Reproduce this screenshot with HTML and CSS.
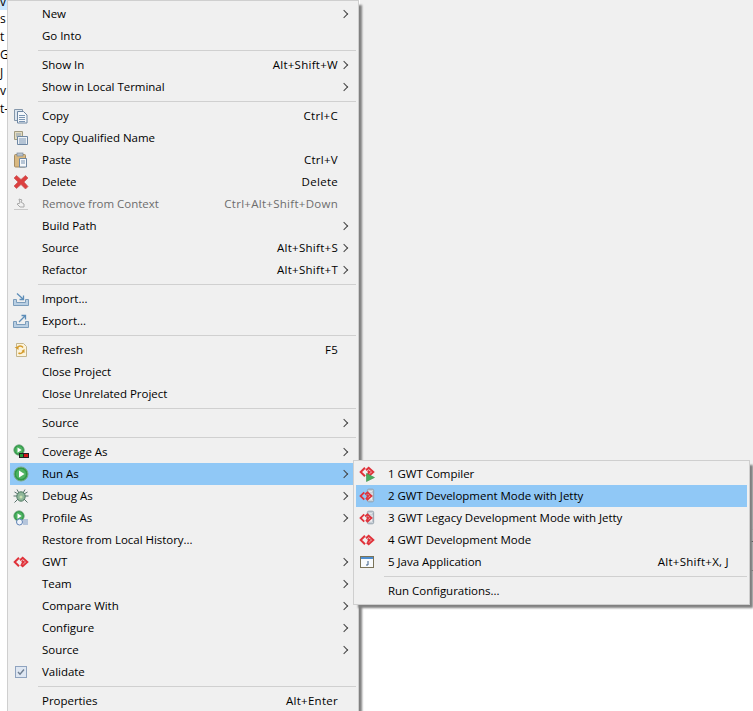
FILE: index.html
```html
<!DOCTYPE html>
<html lang="en">
<head>
<meta charset="utf-8">
<title>Context menu</title>
<link rel="stylesheet" href="styles.css">
</head>
<body>
<svg class="defs" width="0" height="0" aria-hidden="true">
  <defs>
    <symbol id="gwt" viewBox="0 0 16 16">
      <path d="M6 3.800 1.700 8 6 12.200M7 6.300 9.700 3.800 14.300 8 9.700 12.200 7.800 10.400M8.700 6.800 10.700 8 8.700 10" fill="none" stroke="#e0323a" stroke-width="2"/>
    </symbol>
    <symbol id="tray" viewBox="0 0 16 16">
      <path d="M.5 8.500h3v3h9v-3h3v6H.5z" fill="#b9cfe3" stroke="#7b9cbb"/>
    </symbol>
    <symbol id="play" viewBox="0 0 16 16">
      <circle cx="8" cy="8" r="7" fill="#2f9a46" stroke="#7aa886"/>
      <circle cx="8" cy="8" r="5" fill="#4fb363"/>
      <path d="M6 4.500 11.500 8 6 11.500z" fill="#fff"/>
    </symbol>
    <symbol id="jar" viewBox="0 0 10 16">
      <rect x="1.500" y="1" width="7" height="14" rx="1.500" fill="#d5dbe1" stroke="#8b98a5"/>
      <rect x="3" y="3" width="4" height="2" fill="#f5f7f9" stroke="#a0abb5" stroke-width=".5"/>
      <rect x="3" y="8" width="4" height="5" fill="#f2f4f6" stroke="#a0abb5" stroke-width=".5"/>
    </symbol>
  </defs>
</svg>

<div class="desktop">
  <div class="tree">
    <span class="tree-sel">v</span>
    <span>s</span><span>t</span><span>G</span><span>J</span><span>v</span><span>t-</span>
  </div>
  <div class="upper"></div>
  <div class="rule rule-light"></div>
  <div class="rule rule-dark"></div>
  <div class="rule rule-grey"></div>
</div>

<div class="menu main-menu">
  <div class="item"><span class="ic"></span><span class="lb">New</span><span class="sc"></span><span class="ar"></span></div>
  <div class="item"><span class="ic"></span><span class="lb">Go Into</span></div>
  <div class="sep"></div>
  <div class="item"><span class="ic"></span><span class="lb">Show In</span><span class="sc">Alt+Shift+W</span><span class="ar"></span></div>
  <div class="item"><span class="ic"></span><span class="lb">Show in Local Terminal</span><span class="sc"></span><span class="ar"></span></div>
  <div class="sep"></div>
  <div class="item"><span class="ic"><svg width="16" height="16" viewBox="0 0 16 16"><path d="M1.500 1.500h8v11h-8z" fill="#dde6ef" stroke="#8497ab"/><path d="M4.500 3.500h6l3.500 3.500v8H4.500z" fill="#f4f7fa" stroke="#6e87a3"/><path d="M6 7.500h6M6 9.500h6M6 11.500h6M6 13.500h6" stroke="#7a95b3"/></svg></span><span class="lb">Copy</span><span class="sc end">Ctrl+C</span></div>
  <div class="item"><span class="ic"><svg width="16" height="16" viewBox="0 0 16 16"><path d="M1.500 1.500h8v8h-8z" fill="#e4dcc0" stroke="#a09a80"/><path d="M3 4h5M3 6h5" stroke="#8a9cb0"/><path d="M4.500 6.500h10v8h-10z" fill="#eef2f6" stroke="#6e87a3"/><path d="M6 9h7M6 11h7M6 13h7" stroke="#7a95b3"/></svg></span><span class="lb">Copy Qualified Name</span></div>
  <div class="item"><span class="ic"><svg width="16" height="16" viewBox="0 0 16 16"><rect x="1.500" y="2.500" width="11" height="12.500" rx="1" fill="#d9b880" stroke="#a48b62"/><rect x="4" y="1" width="6" height="3" fill="#b9c2cc" stroke="#7c8a99" stroke-width=".7"/><path d="M6.500 6.500h7v8.500h-7z" fill="#f6f8fa" stroke="#6e87a3"/><path d="M8 9h4M8 11h4" stroke="#7a95b3"/></svg></span><span class="lb">Paste</span><span class="sc end">Ctrl+V</span></div>
  <div class="item"><span class="ic"><svg width="16" height="16" viewBox="0 0 16 16"><path d="M3.500 1.500 8 5.500l4.500-4 2.500 2.500-4 4 4 4.500-2.500 2.500L8 10.500l-4.500 4L1 12l4-4-4-4z" fill="#dc4040" stroke="#c85a5a" stroke-width=".7"/></svg></span><span class="lb">Delete</span><span class="sc end">Delete</span></div>
  <div class="item dis"><span class="ic"><svg width="16" height="16" viewBox="0 0 16 16"><path d="M1 13.500h14" stroke="#c8c8c8"/><path d="M6 3l3 1-1 2 3 2v3H7L4 8l3-1z" fill="none" stroke="#a8a8a8"/></svg></span><span class="lb">Remove from Context</span><span class="sc end">Ctrl+Alt+Shift+Down</span></div>
  <div class="item"><span class="ic"></span><span class="lb">Build Path</span><span class="sc"></span><span class="ar"></span></div>
  <div class="item"><span class="ic"></span><span class="lb">Source</span><span class="sc">Alt+Shift+S</span><span class="ar"></span></div>
  <div class="item"><span class="ic"></span><span class="lb">Refactor</span><span class="sc">Alt+Shift+T</span><span class="ar"></span></div>
  <div class="sep"></div>
  <div class="item"><span class="ic"><svg width="16" height="16" viewBox="0 0 16 16"><use href="#tray"/><path d="M4 2.500l6 5.500M6.500 8.500h4V4.500" fill="none" stroke="#5c8db8" stroke-width="1.300"/></svg></span><span class="lb">Import...</span></div>
  <div class="item"><span class="ic"><svg width="16" height="16" viewBox="0 0 16 16"><use href="#tray"/><path d="M6 9l6-6M8.500 2.500h4v4" fill="none" stroke="#5c8db8" stroke-width="1.300"/></svg></span><span class="lb">Export...</span></div>
  <div class="sep"></div>
  <div class="item"><span class="ic"><svg width="16" height="16" viewBox="0 0 16 16"><path d="M3.500 1.500h7l3 3v10h-10z" fill="#fbf3dc" stroke="#c4b58c"/><path d="M10 5.500A3.500 3.500 0 0 0 4 6M5.500 11A3.500 3.500 0 0 0 10.500 9" fill="none" stroke="#d49a2a" stroke-width="1.500"/><path d="M1.500 5h4v3zM11.500 7v4l-3-2z" fill="#d49a2a"/></svg></span><span class="lb">Refresh</span><span class="sc end">F5</span></div>
  <div class="item"><span class="ic"></span><span class="lb">Close Project</span></div>
  <div class="item"><span class="ic"></span><span class="lb">Close Unrelated Project</span></div>
  <div class="sep"></div>
  <div class="item"><span class="ic"></span><span class="lb">Source</span><span class="sc"></span><span class="ar"></span></div>
  <div class="sep"></div>
  <div class="item"><span class="ic"><svg width="16" height="16" viewBox="0 0 16 16"><use href="#play" width="12" height="12" x="0" y="0"/><rect x="6.500" y="9.500" width="9" height="4" fill="#d01818" stroke="#222"/><rect x="6.500" y="9.500" width="4" height="4" fill="#21a038" stroke="#222"/></svg></span><span class="lb">Coverage As</span><span class="sc"></span><span class="ar"></span></div>
  <div class="item hot"><span class="ic"><svg width="16" height="16"><use href="#play"/></svg></span><span class="lb">Run As</span><span class="sc"></span><span class="ar"></span></div>
  <div class="item"><span class="ic"><svg width="16" height="16" viewBox="0 0 16 16"><path d="M4 1.500l2 3.500M12 1.500l-2 3.500M.5 8h3.500M12 8h3.500M1.500 14.500l3.500-3.500M14.500 14.500l-3.500-3.500M1.500 4l3.500 2M14.500 4l-3.500 2" stroke="#55706a"/><ellipse cx="8" cy="8.500" rx="4.200" ry="4.700" fill="#8fb79a" stroke="#4f7a62"/><circle cx="8" cy="9" r="1.500" fill="#c8e0b0"/></svg></span><span class="lb">Debug As</span><span class="sc"></span><span class="ar"></span></div>
  <div class="item"><span class="ic"><svg width="16" height="16" viewBox="0 0 16 16"><use href="#play" width="12" height="12" x="0" y="0"/><circle cx="6.500" cy="12" r="3" fill="#eef3fa" stroke="#5d81b5"/><path d="M10 10h5M10 12h5M10 14h5" stroke="#7b9ac6"/></svg></span><span class="lb">Profile As</span><span class="sc"></span><span class="ar"></span></div>
  <div class="item"><span class="ic"></span><span class="lb">Restore from Local History...</span></div>
  <div class="item"><span class="ic"><svg width="16" height="16"><use href="#gwt"/></svg></span><span class="lb">GWT</span><span class="sc"></span><span class="ar"></span></div>
  <div class="item"><span class="ic"></span><span class="lb">Team</span><span class="sc"></span><span class="ar"></span></div>
  <div class="item"><span class="ic"></span><span class="lb">Compare With</span><span class="sc"></span><span class="ar"></span></div>
  <div class="item"><span class="ic"></span><span class="lb">Configure</span><span class="sc"></span><span class="ar"></span></div>
  <div class="item"><span class="ic"></span><span class="lb">Source</span><span class="sc"></span><span class="ar"></span></div>
  <div class="item"><span class="ic"><svg width="16" height="16" viewBox="0 0 16 16"><rect x="2.500" y="2.500" width="11" height="11" fill="#dfe7f2" stroke="#8fa3bf"/><path d="M5 8l2 2.200L11 5.500" fill="none" stroke="#6f7f92" stroke-width="1.400"/></svg></span><span class="lb">Validate</span></div>
  <div class="sep"></div>
  <div class="item"><span class="ic"></span><span class="lb">Properties</span><span class="sc end">Alt+Enter</span></div>
</div>

<div class="menu sub-menu">
  <div class="item"><span class="ic"><svg width="16" height="16" viewBox="0 0 16 16"><use href="#gwt" y="-2" width="16" height="16"/><path d="M7.500 7.500v8l8-4z" fill="#49ad5c" stroke="#3c8f4d" stroke-width=".6"/></svg></span><span class="lb">1 GWT Compiler</span></div>
  <div class="item hot"><span class="ic"><svg width="16" height="16" viewBox="0 0 16 16"><use href="#jar" x="7" width="9" height="15"/><use href="#gwt" y="1" width="14" height="14"/></svg></span><span class="lb">2 GWT Development Mode with Jetty</span></div>
  <div class="item"><span class="ic"><svg width="16" height="16" viewBox="0 0 16 16"><use href="#jar" x="7" width="9" height="15"/><use href="#gwt" y="1" width="14" height="14"/></svg></span><span class="lb">3 GWT Legacy Development Mode with Jetty</span></div>
  <div class="item"><span class="ic"><svg width="16" height="16"><use href="#gwt"/></svg></span><span class="lb">4 GWT Development Mode</span></div>
  <div class="item"><span class="ic"><svg width="16" height="16" viewBox="0 0 16 16"><rect x="1.500" y="2.500" width="13" height="11" fill="#f8fafc" stroke="#7a7358"/><rect x="2" y="3" width="12" height="2" fill="#4e8ed0"/><path d="M9 7v4H7" fill="none" stroke="#3b5f87"/></svg></span><span class="lb">5 Java Application</span><span class="sc end">Alt+Shift+X, J</span></div>
  <div class="sep"></div>
  <div class="item"><span class="ic"></span><span class="lb">Run Configurations...</span></div>
</div>
</body>
</html>
```

FILE: styles.css
```css
* { box-sizing: border-box; }
html, body { margin: 0; height: 100%; overflow: hidden; }
body {
  width: 753px;
  height: 711px;
  position: relative;
  font-family: "Open Sans", "Noto Sans", sans-serif;
  font-size: 11.5px;
  letter-spacing: -0.03px;
  color: #000;
  background: #fff;
}
.defs { position: absolute; }
.desktop { display: flex; flex-direction: column; height: 711px; padding-left: 360px; }
.tree {
  position: absolute;
  left: 0; top: 0;
  width: 8px;
  display: flex;
  flex-direction: column;
  font-size: 12px;
  line-height: 18px;
  overflow: hidden;
  white-space: nowrap;
}
.tree-sel { background: #cce8ff; height: 10px; line-height: 4px; }
.upper { height: 529px; background: #f0f0f0; }
.rule { height: 1px; }
.rule-light { background: #d8d8d8; }
.rule-dark { background: #222; margin-top: 11px; }
.rule-grey { background: #777; margin-top: 28px; }
.menu {
  position: absolute;
  background: #f0f0f0;
  border: 1px solid #cfcfcf;
  padding: 2px;
  box-shadow: 4px 4px 2px -1px #808080;
}
.main-menu { left: 7px; top: 0; width: 352px; height: 722px; }
.sub-menu { left: 353px; top: 460px; width: 397px; height: 145px; }
.item { display: flex; align-items: center; height: 22px; line-height: 22px; white-space: nowrap; }
.hot { background: #90c8f6; }
.dis { color: #6d6d6d; }
.ic { width: 32px; flex: none; display: flex; padding-left: 3px; align-items: center; }
.ic svg { display: block; }
.lb { flex: none; }
.sc { margin-left: auto; letter-spacing: 0.28px; }
.ar { width: 18px; height: 22px; flex: none; position: relative; }
.ar::after {
  content: "";
  position: absolute;
  left: 3px; top: 8px;
  width: 5px; height: 5px;
  border-top: 1px solid #444;
  border-right: 1px solid #444;
  transform: rotate(45deg);
}
.end { margin-right: 18px; }
.sep { height: 1px; margin: 3px 0 3px 28px; background: #d0d0d0; }
```
